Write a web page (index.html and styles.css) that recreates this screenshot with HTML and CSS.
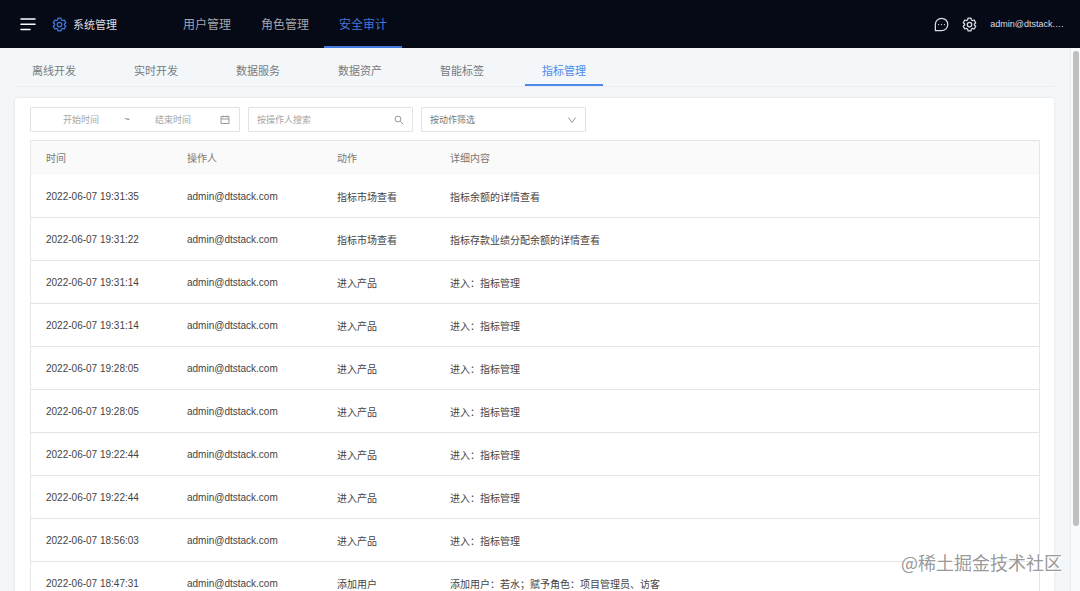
FILE: index.html
```html
<!DOCTYPE html>
<html lang="zh-CN">
<head>
<meta charset="utf-8">
<title>系统管理 - 安全审计</title>
<link rel="stylesheet" href="styles.css">
</head>
<body>
<svg class="sprite" aria-hidden="true">
  <symbol id="gear" viewBox="0 0 24 24">
    <path d="M9.6 1.800h4.800l.7 3.100 1.400.8 2.900-.9 2.500 4.300-2.100 2.100v1.600l2.100 2.100-2.500 4.300-2.900-.9-1.400.8-.7 3.100H9.600l-.7-3.100-1.400-.8-2.900.9-2.500-4.300 2.100-2.100v-1.600L2.100 9.100l2.500-4.300 2.900.9 1.400-.8z"/>
    <circle cx="12" cy="12" r="3.600"/>
  </symbol>
</svg>
<header class="topbar">
  <button class="icon-btn menu-btn" type="button" aria-label="菜单">
    <svg width="16" height="14" viewBox="0 0 16 14"><path d="M1 2h14M1 7.200h14M1 12.400h9" fill="none" stroke="#fff" stroke-width="1.500" stroke-linecap="round"/></svg>
  </button>
  <a class="brand" href="#">
    <svg class="icon brand-icon"><use href="#gear"/></svg>
    <span>系统管理</span>
  </a>
  <nav class="nav">
    <a class="nav-item" href="#">用户管理</a>
    <a class="nav-item" href="#">角色管理</a>
    <a class="nav-item active" href="#">安全审计</a>
  </nav>
  <div class="tools">
    <button class="icon-btn" type="button" aria-label="消息">
      <svg class="icon" viewBox="0 0 24 24"><path d="M2.200 21.800V12a9.900 9.900 0 1 1 9.800 9.800z"/><path class="dots" d="M7.300 12h.1M12 12h.1M16.700 12h.1"/></svg>
    </button>
    <button class="icon-btn" type="button" aria-label="设置">
      <svg class="icon"><use href="#gear"/></svg>
    </button>
    <a class="user" href="#">admin@dtstack.…</a>
  </div>
</header>
<div class="body">
  <main class="page">
    <nav class="tabs">
      <a class="tab" href="#">离线开发</a>
      <a class="tab" href="#">实时开发</a>
      <a class="tab" href="#">数据服务</a>
      <a class="tab" href="#">数据资产</a>
      <a class="tab" href="#">智能标签</a>
      <a class="tab active" href="#">指标管理</a>
    </nav>
    <section class="card">
      <form class="filters">
        <div class="field range">
          <input type="text" placeholder="开始时间" aria-label="开始时间">
          <span class="tilde">~</span>
          <input type="text" placeholder="结束时间" aria-label="结束时间">
          <svg class="range-icon" width="10" height="10" viewBox="0 0 10 10"><path d="M1 1.500h8v7H1zM1 4h8M3 .5v2M7 .5v2"/></svg>
        </div>
        <div class="field search">
          <input type="text" placeholder="按操作人搜索" aria-label="按操作人搜索">
          <svg width="10" height="10" viewBox="0 0 10 10"><circle cx="4" cy="4" r="2.900"/><path d="M6.200 6.200l3 3"/></svg>
        </div>
        <div class="field choose">
          <select aria-label="按动作筛选"><option>按动作筛选</option></select>
          <svg width="10" height="10" viewBox="0 0 10 10"><path d="M1.500 2.500L5 7.500l3.500-5"/></svg>
        </div>
      </form>
      <table class="log">
        <colgroup><col class="c-time"><col class="c-user"><col class="c-action"><col></colgroup>
        <thead><tr><th>时间</th><th>操作人</th><th>动作</th><th>详细内容</th></tr></thead>
        <tbody>
          <tr><td>2022-06-07 19:31:35</td><td>admin@dtstack.com</td><td>指标市场查看</td><td>指标余额的详情查看</td></tr>
          <tr><td>2022-06-07 19:31:22</td><td>admin@dtstack.com</td><td>指标市场查看</td><td>指标存款业绩分配余额的详情查看</td></tr>
          <tr><td>2022-06-07 19:31:14</td><td>admin@dtstack.com</td><td>进入产品</td><td>进入：指标管理</td></tr>
          <tr><td>2022-06-07 19:31:14</td><td>admin@dtstack.com</td><td>进入产品</td><td>进入：指标管理</td></tr>
          <tr><td>2022-06-07 19:28:05</td><td>admin@dtstack.com</td><td>进入产品</td><td>进入：指标管理</td></tr>
          <tr><td>2022-06-07 19:28:05</td><td>admin@dtstack.com</td><td>进入产品</td><td>进入：指标管理</td></tr>
          <tr><td>2022-06-07 19:22:44</td><td>admin@dtstack.com</td><td>进入产品</td><td>进入：指标管理</td></tr>
          <tr><td>2022-06-07 19:22:44</td><td>admin@dtstack.com</td><td>进入产品</td><td>进入：指标管理</td></tr>
          <tr><td>2022-06-07 18:56:03</td><td>admin@dtstack.com</td><td>进入产品</td><td>进入：指标管理</td></tr>
          <tr><td>2022-06-07 18:47:31</td><td>admin@dtstack.com</td><td>添加用户</td><td>添加用户：若水；赋予角色：项目管理员、访客</td></tr>
        </tbody>
      </table>
    </section>
  </main>
  <div class="scroll-track"><div class="scroll-thumb"></div></div>
</div>
<div class="watermark">@稀土掘金技术社区</div>
</body>
</html>
```
FILE: styles.css
```css
* { box-sizing: border-box; }

body {
  margin: 0;
  height: 100vh;
  display: flex;
  flex-direction: column;
  overflow: hidden;
  background: #f3f7fa;
  color: #444;
  font-family: "Liberation Sans", "Noto Sans CJK SC", sans-serif;
  font-size: 10px;
}

a { color: inherit; text-decoration: none; }
.sprite { display: none; }

.topbar {
  flex: none;
  display: flex;
  align-items: center;
  height: 48px;
  padding: 0 16px 0 20px;
  background: #060916;
  color: #dcdee3;
}

.icon-btn {
  display: flex;
  padding: 0;
  border: 0;
  background: none;
  color: inherit;
}

.icon {
  width: 15px;
  height: 15px;
  fill: none;
  stroke: currentColor;
  stroke-width: 2;
  stroke-linejoin: round;
  stroke-linecap: round;
}

.menu-btn { width: 32px; }

.brand {
  display: flex;
  align-items: center;
  gap: 6px;
  width: 116px;
  font-size: 11px;
}

.brand-icon { color: #4379dc; }

.nav { display: flex; flex: 1; align-self: stretch; }

.nav-item {
  height: 48px;
  padding: 0 15px;
  color: #a2a5ac;
  font-size: 12px;
  line-height: 50px;
}

.nav-item.active {
  color: #4379dc;
  box-shadow: inset 0 -2px #4379dc;
}

.tools { display: flex; align-items: center; gap: 13px; }
.user { font-size: 9px; }

.body { flex: 1; display: flex; min-height: 0; }
.page { flex: 1; min-width: 0; padding: 0 16px 0 15px; }

.tabs {
  display: flex;
  gap: 24px;
  height: 39px;
  margin-bottom: 11px;
  border-bottom: 1px solid #e9edf0;
}

.tab {
  height: 38px;
  padding: 0 17px;
  color: #777b80;
  font-size: 11px;
  line-height: 46px;
}

.tab.active {
  color: #4c89e8;
  box-shadow: inset 0 -2px #4c89e8;
}

.card {
  padding: 9px 14px 9px 15px;
  border-radius: 3px;
  background: #fff;
  box-shadow: 0 0 3px rgba(0, 0, 0, 0.1);
}

.filters { display: flex; gap: 8px; margin-bottom: 8px; }

.field {
  display: flex;
  align-items: center;
  width: 165px;
  height: 25px;
  padding: 0 8px;
  border: 1px solid #e2e2e2;
  border-radius: 1px;
  background: #fff;
}

.field svg {
  flex: none;
  fill: none;
  stroke: #999;
  stroke-width: 1;
}

.field input,
.field select {
  flex: 1;
  min-width: 0;
  height: 100%;
  padding: 0;
  border: 0;
  outline: 0;
  background: none;
  appearance: none;
  color: #777;
  font-family: inherit;
  font-size: 9px;
}

.field input::placeholder { color: #a6a6a6; }

.range { width: 210px; padding-right: 9px; }
.range input { text-align: center; }
.range-icon { margin-left: 5px; }
.tilde { width: 8px; color: #888; text-align: center; }

.log {
  width: 100%;
  table-layout: fixed;
  border: 1px solid #e6e6e6;
  border-collapse: separate;
  border-spacing: 0;
}

.c-time { width: 141px; }
.c-user { width: 150px; }
.c-action { width: 113px; }

.log th,
.log td {
  padding: 0 0 0 15px;
  text-align: left;
  white-space: nowrap;
}

.log th {
  height: 34px;
  padding-bottom: 2px;
  background: #fafafa;
  color: #777;
  font-weight: 400;
}

.log td { height: 43px; border-bottom: 1px solid #e4e4e4; }

.scroll-track {
  width: 10px;
  padding: 3px 1px 0 2px;
  border-left: 1px solid #e9ecee;
  background: #f8fafb;
}

.scroll-thumb { height: 88%; border-radius: 4px; background: #bfbfbf; }

.watermark {
  position: absolute;
  right: 18px;
  bottom: 17px;
  color: rgba(140, 140, 140, 0.9);
  font-family: "Noto Sans CJK SC", sans-serif;
  font-size: 18px;
  line-height: 24px;
  text-shadow: 0 0 1px #fff, 1px 1px 1px #fff;
}
```
